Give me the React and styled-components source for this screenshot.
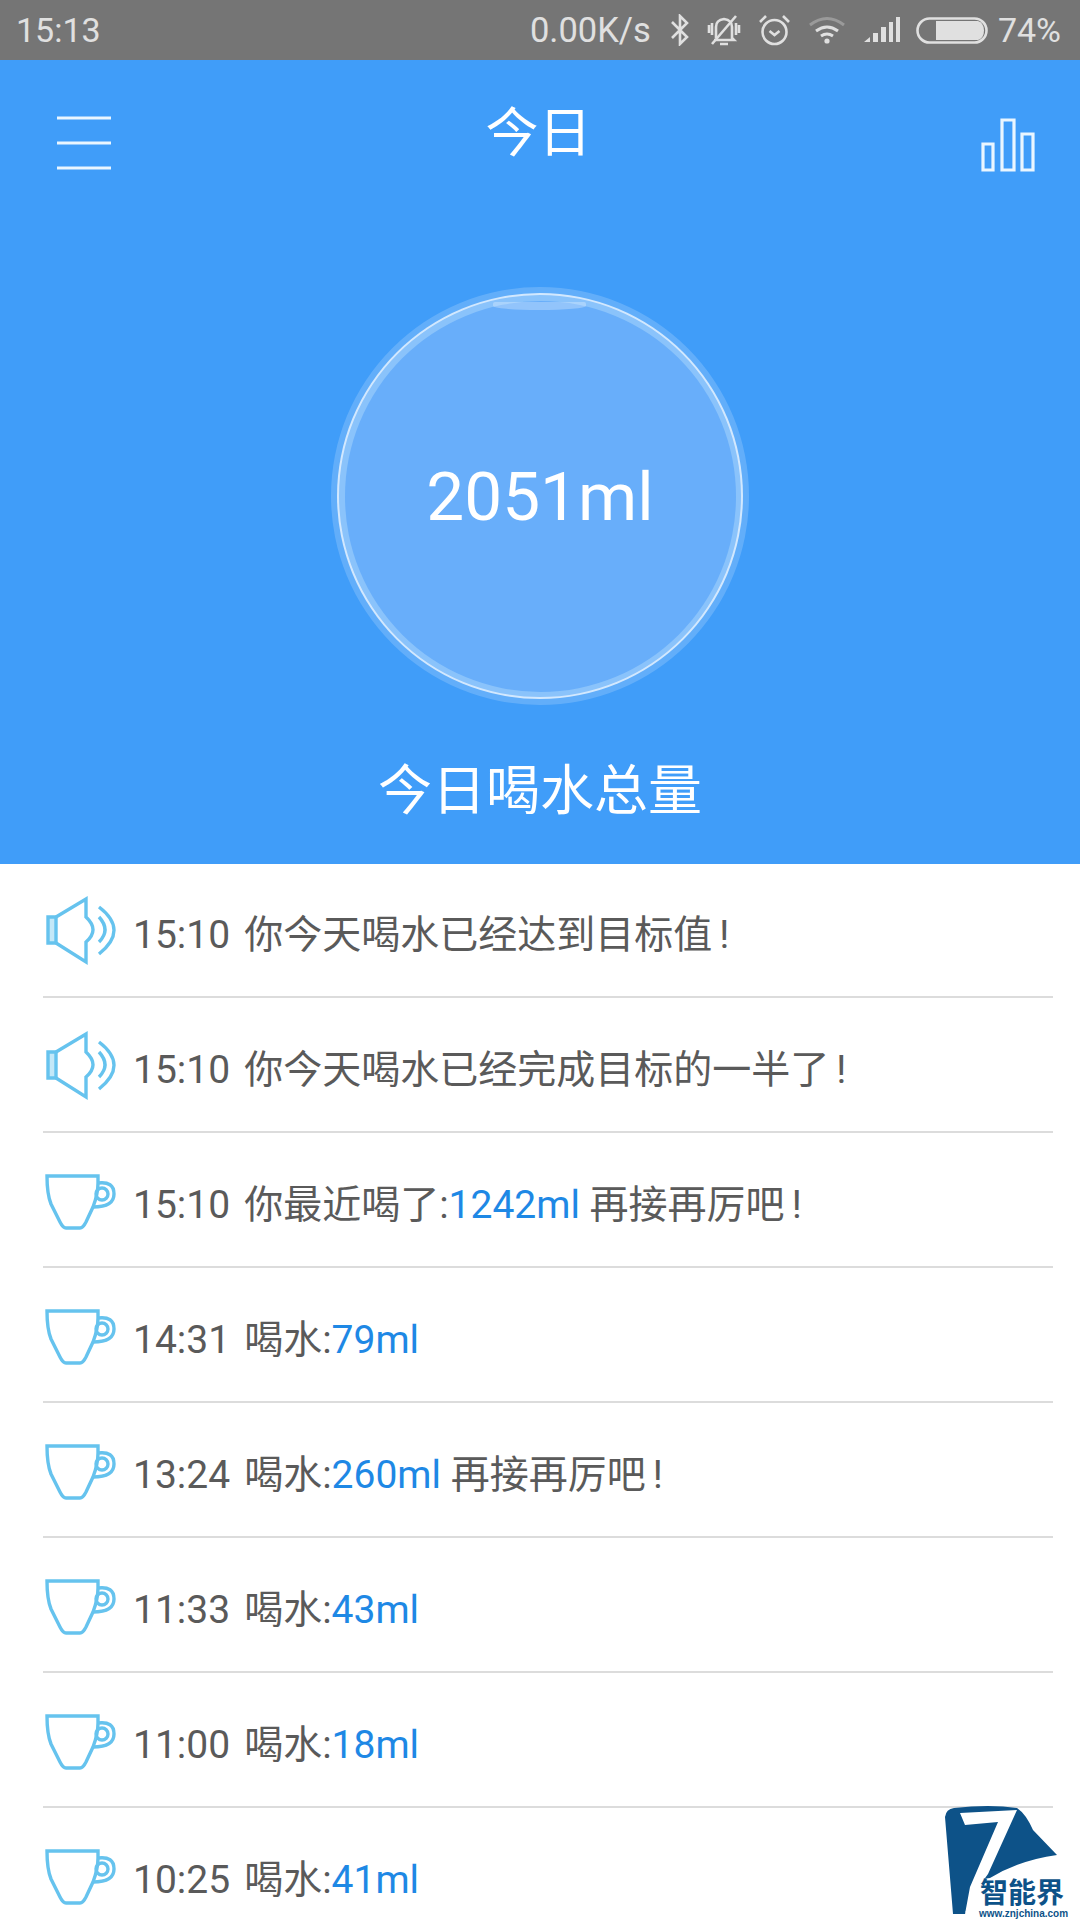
import styled, { createGlobalStyle } from "styled-components"

const Global = createGlobalStyle`
  html, body { margin: 0; padding: 0; background: #fff; }
  * { box-sizing: border-box; }
`

const Screen = styled.div`
  position: relative;
  width: 1080px;
  height: 1920px;
  overflow: hidden;
  background: #fff;
  font-family: Roboto, "Noto Sans CJK SC", sans-serif;
`

const StatusBar = styled.div`
  height: 60px;
  background: #757575;
  color: #e0e0e0;
  display: flex;
  align-items: center;
  justify-content: space-between;
  padding: 0 19px 0 16px;
  font-size: 34px;
`

const StatusRight = styled.div`
  display: flex;
  align-items: center;
`

const Speed = styled.span`
  margin-right: 19px;
  font-size: 34.5px;
`

const StatusIcon = styled.svg`
  display: block;
  margin-right: ${p => p.$gap}px;
  fill: none;
  stroke: #e0e0e0;
  stroke-width: 2.6;
`

const Hero = styled.div`
  height: 804px;
  background: #409df9;
  color: #fff;
  display: flex;
  flex-direction: column;
  align-items: center;
`

const TopBar = styled.div`
  width: 100%;
  height: 128px;
  display: flex;
  align-items: flex-start;
  justify-content: space-between;
  padding: 56px 45px 0 57px;
`

const Title = styled.div`
  font-size: 53px;
  line-height: 72px;
  margin-top: -18px;
  margin-right: 13px;
`

const BarIcon = styled.svg`
  display: block;
  fill: none;
  stroke: #eaf6ff;
  stroke-width: 3.2;
`

const Dial = styled.div`
  position: relative;
  margin-top: 99px;
  width: 418px;
  height: 418px;
  border-radius: 50%;
  background: rgba(255, 255, 255, 0.18);
  display: flex;
  align-items: center;
  justify-content: center;
`

const DialRing = styled.div`
  width: 406px;
  height: 406px;
  border-radius: 50%;
  border: 2.5px solid rgba(255, 255, 255, 0.62);
  background: rgba(255, 255, 255, 0.26);
  padding: 5.5px;
`

const DialFace = styled.div`
  width: 100%;
  height: 100%;
  border-radius: 50%;
  background: #68aefa;
  display: flex;
  align-items: center;
  justify-content: center;
  font-size: 67.5px;
`

const Gloss = styled.div`
  position: absolute;
  top: 15px;
  left: 162px;
  width: 93px;
  height: 8px;
  border-radius: 2px 2px 50% 50%;
  background: rgba(255, 255, 255, 0.28);
`

const Caption = styled.div`
  margin-top: 51px;
  font-size: 54px;
  line-height: 72px;
`

const List = styled.div`
  margin-top: -1px;
  padding: 0 27px 0 43px;
`

const Row = styled.div`
  height: 135px;
  display: flex;
  align-items: center;
  border-bottom: 2px solid #dcdcdc;
  color: #5a5a5a;
  font-size: 39px;
  padding-top: 3px;
`

const RowIcon = styled.svg`
  display: block;
  flex: none;
  width: 72px;
  height: 72px;
  margin: 0 16px 0 2px;
  position: relative;
  top: -1px;
  fill: none;
  stroke: #66c3ee;
  stroke-width: 3.4;
`

const Clock = styled.span`
  margin-right: 14px;
`

const Amount = styled.span`
  color: #1e88e5;
`

const Bang = styled.span`
  padding-left: 7px;
`

const Watermark = styled.div`
  position: absolute;
  right: 10px;
  bottom: 0;
  width: 130px;
  height: 118px;
  color: #0d5288;
`

const MarkBrand = styled.div`
  position: absolute;
  left: 40px;
  bottom: 11px;
  font-size: 28px;
  line-height: 30px;
  font-weight: 700;
  white-space: nowrap;
`

const MarkUrl = styled.div`
  position: absolute;
  left: 39px;
  bottom: 0;
  font-family: "Liberation Sans", sans-serif;
  font-size: 10px;
  line-height: 12px;
  font-weight: 700;
  white-space: nowrap;
`

const Speaker = () => (
  <RowIcon viewBox="0 0 72 72">
    <path d="M3 23h8v26H3z" fill="#c3e8f8" />
    <path d="M11 23 41 5v18q14 13 0 25v20L11 49" />
    <path d="M54 23q12 13 0 25" />
    <path d="M54 13q30 23 0 47" />
  </RowIcon>
)

const Cup = () => (
  <RowIcon viewBox="0 -2 72 72">
    <path d="M2 10H53V17Q53 28 48 41L41 56Q38 62 35 62H21Q18 62 15 56L6 38Q2 28 2 10z" />
    <path d="M53 17Q69 15 69 28Q69 41 48 41" />
    <circle cx="57" cy="28" r="6" />
  </RowIcon>
)

const rows = [
  { icon: "sound", time: "15:10", text: "你今天喝水已经达到目标值", bang: true },
  { icon: "sound", time: "15:10", text: "你今天喝水已经完成目标的一半了", bang: true },
  { icon: "cup", time: "15:10", text: "你最近喝了:", amount: "1242ml", tail: " 再接再厉吧", bang: true },
  { icon: "cup", time: "14:31", text: "喝水:", amount: "79ml" },
  { icon: "cup", time: "13:24", text: "喝水:", amount: "260ml", tail: " 再接再厉吧", bang: true },
  { icon: "cup", time: "11:33", text: "喝水:", amount: "43ml" },
  { icon: "cup", time: "11:00", text: "喝水:", amount: "18ml" },
  { icon: "cup", time: "10:25", text: "喝水:", amount: "41ml" },
]

function App() {
  return (
    <Screen>
      <Global />
      <StatusBar>
        <span>15:13</span>
        <StatusRight>
          <Speed>0.00K/s</Speed>
          <StatusIcon $gap={17} width="20" height="32" viewBox="0 0 20 32">
            <path d="M2 8l15 15-7 7V2l7 7L2 24" />
          </StatusIcon>
          <StatusIcon $gap={17} width="34" height="32" viewBox="0 0 34 32">
            <path d="M9 24V13q0-7 8-8 8 1 8 8v11l2 2H7" />
            <path d="M13 30h8M2 11v8M5 9v12M32 11v8M29 9v12" />
            <path d="M5 30 29 2" />
          </StatusIcon>
          <StatusIcon $gap={17} width="33" height="32" viewBox="0 0 33 32">
            <circle cx="16.5" cy="18" r="12" />
            <path d="M11.5 17l5 4 5-4M2 8l6-6M31 8l-6-6" />
          </StatusIcon>
          <StatusIcon $gap={17} width="38" height="28" viewBox="0 0 38 28">
            <path d="M2 9q17-13 34 0" stroke="#9a9a9a" strokeWidth="3" />
            <path d="M8 15q11-8 22 0M13 20q6-4 12 0" strokeWidth="3" />
            <circle cx="19" cy="25" r="2.6" fill="#e0e0e0" stroke="none" />
          </StatusIcon>
          <StatusIcon $gap={15} width="38" height="26" viewBox="0 0 38 26">
            <path d="M1 25l6-5v5zM10 25v-9h5v9zM18 25V10h5v15zM26 25V5h4v20zM33 25V0h4v25z" fill="#e0e0e0" stroke="none" />
          </StatusIcon>
          <StatusIcon $gap={10} width="72" height="27" viewBox="0 0 72 27">
            <rect x="1.5" y="1.5" width="69" height="24" rx="12" />
            <path d="M20 4h42q6 2 6 9.500t-6 9.500H20z" fill="#e0e0e0" stroke="none" />
          </StatusIcon>
          <span>74%</span>
        </StatusRight>
      </StatusBar>
      <Hero>
        <TopBar>
          <BarIcon width="54" height="54" viewBox="0 0 54 54">
            <path d="M0 2h54M0 27h54M0 52h54" />
          </BarIcon>
          <Title>今日</Title>
          <BarIcon width="56" height="56" viewBox="0 0 56 56">
            <path d="M4 54V28h10v26zM23 54V4h12v50zM43 54V18h11v36z" />
          </BarIcon>
        </TopBar>
        <Dial>
          <DialRing>
            <DialFace>2051ml</DialFace>
          </DialRing>
          <Gloss />
        </Dial>
        <Caption>今日喝水总量</Caption>
      </Hero>
      <List>
        {rows.map((r, i) => (
          <Row key={i}>
            {r.icon === "sound" ? <Speaker /> : <Cup />}
            <span>
              <Clock>{r.time}</Clock>
              {r.text}
              {r.amount && <Amount>{r.amount}</Amount>}
              {r.tail}
              {r.bang && <Bang>!</Bang>}
            </span>
          </Row>
        ))}
      </List>
      <Watermark>
        <svg width="130" height="118" viewBox="0 0 130 118">
          <path d="M5 15Q6 7 14 6Q50 2 77 6Q86 12 93 28L117 53Q80 58 50 76L35 78L25 112H13Z" fill="#0d5288" />
          <path d="M20 11L77 8L48 72L35 90L25 112L30 85L58 20L25 23Z" fill="#fff" />
        </svg>
        <MarkBrand>智能界</MarkBrand>
        <MarkUrl>www.znjchina.com</MarkUrl>
      </Watermark>
    </Screen>
  )
}

export default App
